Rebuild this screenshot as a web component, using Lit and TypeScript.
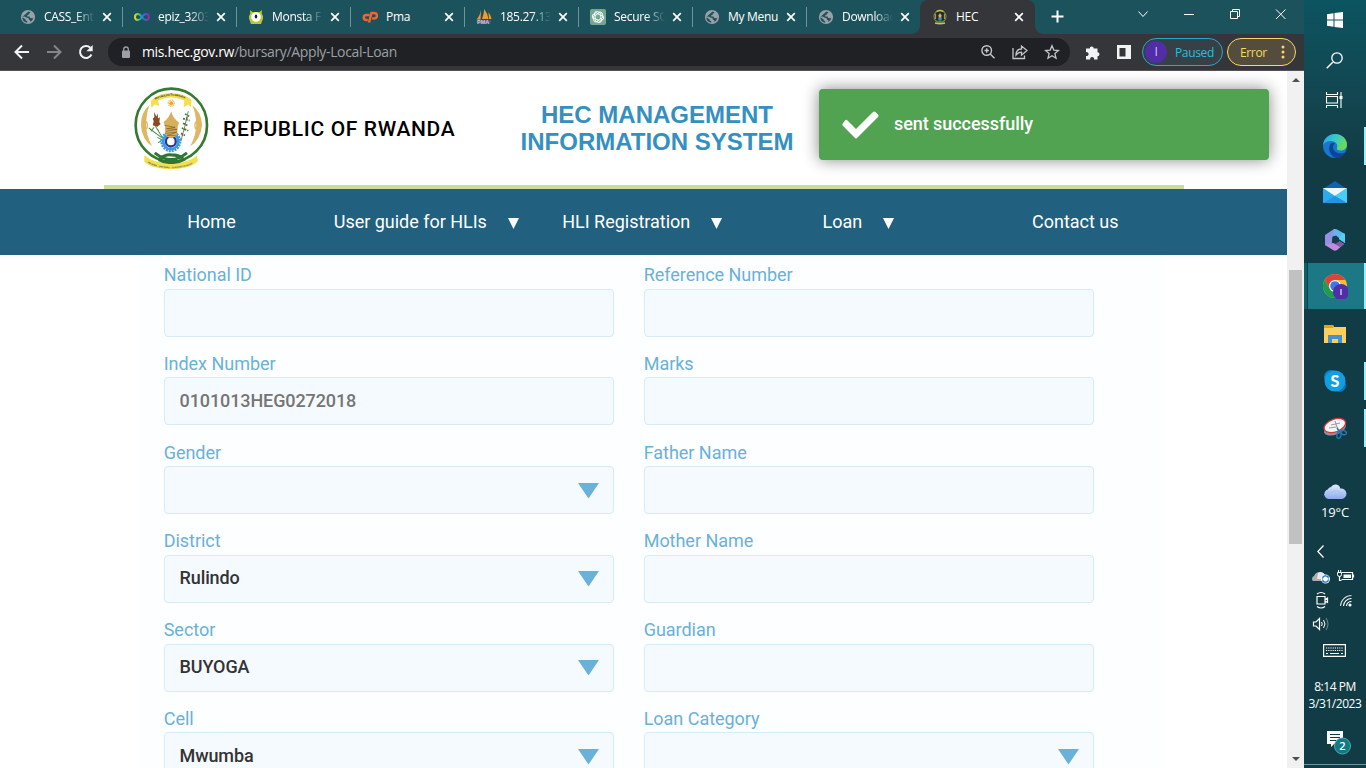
import { LitElement, html, svg, css, nothing } from "lit";
import { customElement, property } from "lit/decorators.js";

const globe = html`<svg width="16" height="16" viewBox="0 0 16 16"><circle cx="8" cy="8" r="7.100" fill="#9aa0a6"/><path d="M8.500 2.500 10.500 3.200 9.800 4.300 8.800 4.600 8.700 5.800 7 6.600 7.200 7.500 9.500 7.600 10.200 9 12.600 9.300 13.400 8.500 12.500 11 10.300 13 10.200 11.200 8.800 10.400 8.700 9.300 6.200 8.400 4.600 7.600 2.500 7.300 2.300 8.600 4.400 9.600 5.600 10.400 5.800 11.600 7.200 12.200 7.200 13.700A5.800 5.800 0 0 1 2.200 8Z" fill="#1c525b"/></svg>`;

const closeIcon = html`<svg class="close" width="10" height="10" viewBox="0 0 10 10"><path d="M1.200 1.200 8.800 8.800M8.800 1.200 1.200 8.800" stroke="#fff" stroke-width="1.700"/></svg>`;

const sealArt = svg`
  <path d="M134 248 Q146 262 178 270 Q213 278 250 270 Q280 262 292 250 L294 266 Q280 286 213 290 Q150 288 133 268Z" fill="#f3e04e"/>
  <circle cx="214.500" cy="159.500" r="108.500" fill="#fff" stroke="#357a30" stroke-width="8"/>
  <path d="M132 250 Q150 268 185 272 L240 272 Q280 266 292 250 L295 268 Q272 289 213 291 Q152 288 133 268Z" fill="#f3e04e"/>
  <path id="motto" d="M142 270 Q160 286 213 288 Q266 286 284 270" fill="none"/>
  <path d="M152 86 Q180 64 214 64 Q250 64 276 84 L274 106 L266 98 L252 106 L254 86 Q214 68 174 86 L178 102 L164 98 L154 108Z" fill="#f3e04e"/>
  <path id="title" d="M165 84 Q213 60 264 84" fill="none"/>
  <text font-family="Liberation Sans" font-weight="700" font-size="8" fill="#333"><textPath href="#title" textLength="94">REPUBULIKA Y'U RWANDA</textPath></text>
  <text font-family="Liberation Sans" font-weight="700" font-size="6.500" fill="#555"><textPath href="#motto" textLength="142">UBUMWE - UMURIMO - GUKUNDA IGIHUGU</textPath></text>
  <circle cx="214" cy="94" r="9" fill="none" stroke="#f5ba45" stroke-width="4" stroke-dasharray="3 1.800"/><circle cx="214" cy="94" r="6" fill="#f3a52e"/>
  <path d="M148 100 Q122 120 122 160 Q126 205 156 222 Q138 190 138 160 Q138 125 148 100Z" fill="#dfb664"/>
  <path d="M278 100 Q306 120 308 160 Q302 205 272 222 Q290 190 290 160 Q290 125 278 100Z" fill="#dfb664"/>
  <path d="M138 148 Q146 160 138 172M290 148 Q282 160 290 172" fill="none" stroke="#dfb664" stroke-width="4"/>
  <path d="M162 120 L169 134 L173 125 L174 140 L180 136 L178 150 L182 156 L172 164 L158 160 L161 148 L158 140 L163 136Z" fill="#8b4a1f"/>
  <path d="M166 162 L188 198M146 168 L184 196M152 178 L162 166M172 196 L188 204 L174 212M176 176 L170 170" stroke="#4f8f4c" stroke-width="3" fill="none"/>
  <path d="M266 118 Q256 164 244 206" stroke="#3d8044" stroke-width="2.500" fill="none"/>
  <path d="M256 126 L270 134M250 140 L270 146M250 154 L266 162M246 168 L266 176M244 184 L256 190" stroke="#3d8044" stroke-width="5" stroke-dasharray="6 3"/>
  <g fill="#b83248"><circle cx="262" cy="138" r="2.500"/><circle cx="256" cy="156" r="2.500"/><circle cx="254" cy="172" r="2.500"/><circle cx="248" cy="188" r="2.500"/><circle cx="242" cy="202" r="3"/></g>
  <circle cx="213" cy="208" r="28" fill="none" stroke="#3b9be0" stroke-width="8" stroke-dasharray="6 2.800"/><circle cx="213" cy="208" r="23" fill="none" stroke="#3b9be0" stroke-width="8"/>
  <circle cx="213" cy="208" r="15" fill="#fff" stroke="#2a3795" stroke-width="7"/>
  <path d="M214 118 Q208 138 191 150 Q194 158 195 164 L196 186 Q200 196 214 198 Q228 196 232 186 L234 164 Q236 158 238 152 Q220 140 214 118Z" fill="#d8b05c"/>
  <path d="M194 160 L226 166 L200 170 L232 172 L198 178M196 184 L232 180 L202 190 L228 190" stroke="#6a4a22" stroke-width="1.600" fill="none"/>
  <path d="M164 242 Q190 262 214 262 Q236 262 262 242M176 262 Q196 246 214 248 Q240 248 252 262 Q234 272 214 270 Q194 272 176 262" fill="none" stroke="#2f7535" stroke-width="9"/>`;

const seal = (w: number, h: number) => html`<svg width=${w} height=${h} viewBox="98 40 234 256" preserveAspectRatio="none">${sealArt}</svg>`;

const smallSeal = html`<svg width="16" height="16" viewBox="0 0 16 16"><circle cx="8" cy="7.500" r="6" fill="#222c26" stroke="#6c8a4c" stroke-width="1.200"/><path d="M4.500 2.500Q8 .5 11.500 2.500M3 14Q8 15.500 13 14" fill="none" stroke="#cfc24e" stroke-width="1.400"/><path d="M3.500 5v5M12.500 5v5" stroke="#b98b48" stroke-width="1.200"/><path d="M8 4 9.600 6.500 9 10H7L6.400 6.500Z" fill="#d8b05c"/><circle cx="8" cy="10" r="1.800" fill="#3d86d8"/><path d="M5 12.500h6" stroke="#3c8a43" stroke-width="1.600"/></svg>`;

const petal = "M8 5.500V4.200a2.500 2.500 0 0 1 4.600 1.500v3L8.500 11";

const tabs = [
  { title: "CASS_Ent", icon: globe },
  { title: "epiz_3203", icon: html`<svg width="16" height="16" viewBox="0 0 16 16"><defs><linearGradient id="inf"><stop offset="0" stop-color="#e6d722"/><stop offset=".35" stop-color="#23b6a8"/><stop offset=".6" stop-color="#2878d8"/><stop offset="1" stop-color="#a322a5"/></linearGradient></defs><path d="M8 8C6.500 5.800 5.500 5 4 5a3 3 0 0 0 0 6c1.500 0 2.500-.8 4-3s2.500-3 4-3a3 3 0 0 1 0 6C10.500 11 9.500 10.200 8 8Z" fill="none" stroke="url(#inf)" stroke-width="2"/></svg>` },
  { title: "Monsta F", icon: html`<svg width="16" height="16" viewBox="0 0 16 16"><path d="M2 1 4.500 3h7L14 1l-.3 3.500Q16 8 14.500 11L13 15H3L1.500 11Q0 8 2.300 4.500Z" fill="#b9c83a"/><circle cx="8" cy="8" r="4.800" fill="#fff"/><ellipse cx="8" cy="7.500" rx="1.300" ry="2" fill="#222"/></svg>` },
  { title: "Pma", icon: html`<svg width="16" height="16" viewBox="0 0 16 16"><path d="M7.500 6H4.300a2.500 2.500 0 0 0 0 5h1.500M7 13.500 9.500 4h2.700a2.300 2.300 0 0 1 0 5.500h-2" fill="none" stroke="#f0662c" stroke-width="2.500"/></svg>` },
  { title: "185.27.13", icon: html`<svg width="16" height="16" viewBox="0 0 16 16"><path d="M5 .5 4.500 10.500H.5Q4 7 5 .5ZM8.200 0Q12 5 12.500 10H6Q8 5 8.200 0ZM12.500 3Q15 7 15.500 10H13Z" fill="#f39a2d"/><path d="M.5 11.500h15l-2 3.500h-12Z" fill="#555b88"/><text x="1" y="15.300" font-family="Liberation Sans" font-weight="700" font-size="5.500" fill="#c9c9dc">PMA</text></svg>` },
  { title: "Secure SQ", icon: html`<svg width="16" height="16" viewBox="0 0 16 16"><rect width="16" height="16" rx="2" fill="#74a892"/><g fill="none" stroke="#fff" stroke-width=".9">${[0, 60, 120, 180, 240, 300].map(a => svg`<path d=${petal} transform="rotate(${a} 8 8)"/>`)}</g></svg>` },
  { title: "My Menu", icon: globe },
  { title: "Download", icon: globe },
  { title: "HEC", icon: smallSeal, active: true },
];

@customElement("browser-chrome")
class BrowserChrome extends LitElement {
  static styles = css`
    :host { display: block; font-family: "Open Sans", "Noto Sans", sans-serif; }
    svg { display: block; flex: none; }
    .strip { display: flex; height: 34px; background: #1c525b; padding-left: 8px; }
    .tab { width: 114px; box-sizing: border-box; display: flex; align-items: center; padding: 0 8px 0 12px; position: relative; }
    .tab.sep::after { content: ""; position: absolute; right: -1px; top: 7px; width: 1px; height: 20px; background: #71929a; }
    .tab.active { background: #35363a; border-radius: 8px 8px 0 0; width: 115px; }
    .tab.active::before, .tab.active::after { content: ""; position: absolute; bottom: 0; width: 8px; height: 8px; }
    .tab.active::before { left: -8px; background: radial-gradient(circle at 0 0, transparent 7.500px, #35363a 8px); }
    .tab.active::after { right: -8px; background: radial-gradient(circle at 100% 0, transparent 7.500px, #35363a 8px); }
    .title { width: 51px; margin-left: 8px; overflow: hidden; white-space: nowrap; color: #fff; font-size: 12px; line-height: 18px; letter-spacing: -0.3px; mask-image: linear-gradient(90deg, #000 62%, transparent 100%); }
    .title.full { mask-image: none; }
    .close { margin-left: 7px; }
    .plus { margin: 10px 0 0 16px; }
    .win { margin-left: auto; display: flex; }
    .bar { height: 37px; box-sizing: border-box; background: #35363a; border-bottom: 1px solid #55505a; display: flex; align-items: center; padding: 0 7px 0 14px; }
    .gap { margin-left: 16px; }
    .side { margin-left: 17px; }
    .omni { flex: none; margin-left: 14px; width: 962px; height: 28px; border-radius: 14px; background: #202124; display: flex; align-items: center; box-sizing: border-box; padding: 0 10px 0 13px; }
    .url { margin-left: 11px; color: #9aa0a6; font-size: 14px; line-height: 20px; letter-spacing: -0.350px; flex: 1; }
    .host { color: #fff; }
    .acts { display: flex; gap: 16px; align-items: center; }
    .pill { height: 28px; box-sizing: border-box; border-radius: 14px; display: flex; align-items: center; font-size: 12px; }
    .paused { width: 81px; margin-left: 11px; border: 1px solid #27a9c8; background: #354147; color: #2fbbdd; padding-left: 2px; letter-spacing: -0.350px; }
    .avatar { width: 22px; height: 22px; border-radius: 50%; background: #512da8; color: #d5c8ee; text-align: center; line-height: 22px; margin-right: 8px; }
    .error { width: 69px; margin-left: 4px; border: 1px solid #fdd663; background: #544d3e; color: #fdd663; padding-left: 12px; letter-spacing: -0.350px; }
    .dots { margin-left: 14px; }
  `;
  render() {
    return html`
      <div class="strip">
        ${tabs.map((t, i) => html`<div class="tab ${t.active ? "active" : i < 7 ? "sep" : ""}">${t.icon}<div class="title ${t.title.length < 8 ? "full" : ""}">${t.title}</div>${closeIcon}</div>`)}
        <svg class="plus" width="13" height="13" viewBox="0 0 13 13"><path d="M6.500 .5v12M.5 6.500h12" stroke="#fff" stroke-width="2"/></svg>
        <div class="win"><svg width="171" height="34" viewBox="0 0 171 34"><g fill="none" stroke="#fff"><path d="M5.500 11.500 10 16.500 14.500 11.500"/><path d="M51 14.500h10"/><path d="M97.500 11.500h7v7h-7zM99.500 11.500v-2h7v7h-2"/><path d="M143 9.500l9.500 9.500M152.500 9.500 143 19"/></g></svg></div>
      </div>
      <div class="bar">
        <svg width="16" height="16" viewBox="0 0 16 16"><path d="M15 8H2M8 1.500 1.500 8 8 14.500" fill="none" stroke="#f1f3f4" stroke-width="2"/></svg>
        <svg class="gap" width="16" height="16" viewBox="0 0 16 16"><path d="M1 8h13M8 1.500 14.500 8 8 14.500" fill="none" stroke="#85868a" stroke-width="2"/></svg>
        <svg class="gap" width="16" height="16" viewBox="0 0 16 16"><path d="M13.500 10.500A6 6 0 1 1 12.300 3.700" fill="none" stroke="#f1f3f4" stroke-width="2"/><path d="M14.700 1v6.300H8.400Z" fill="#f1f3f4"/></svg>
        <div class="omni">
          <svg width="10" height="13" viewBox="0 0 10 13"><rect x="1" y="4.500" width="8" height="7.500" rx="1" fill="#9aa0a6"/><path d="M2.700 5V3.300a2.300 2.300 0 0 1 4.600 0V5" fill="none" stroke="#9aa0a6" stroke-width="1.300"/></svg>
          <div class="url"><span class="host">mis.hec.gov.rw</span>/bursary/Apply-Local-Loan</div>
          <div class="acts">
            <svg width="16" height="16" viewBox="0 0 16 16"><g fill="none" stroke="#c3c6ca" stroke-width="1.400"><circle cx="6.700" cy="6.500" r="4.800"/><path d="M10.200 10 14.500 14.300M4.500 6.500h4.400M6.700 4.300v4.400"/></g></svg>
            <svg width="16" height="16" viewBox="0 0 16 16"><path d="M1 4v10.500h11.500V11.500M9.500 2v3C6 5 4 7.500 4 11c1.500-2 3-2.800 5.500-2.800v3L15 6.500Z" fill="none" stroke="#c3c6ca" stroke-width="1.300"/></svg>
            <svg width="16" height="16" viewBox="0 0 16 16"><path d="M8 1.800 9.800 6.100 14.500 6.500 10.900 9.600 12 14.200 8 11.700 4 14.200 5.100 9.600 1.500 6.500 6.200 6.100Z" fill="none" stroke="#c3c6ca" stroke-width="1.300"/></svg>
          </div>
        </div>
        <svg class="gap" width="14" height="16" viewBox="0 0 14 16"><path d="M0 4.500h3.700a2 2 0 1 1 4 0h3.800v3.700a2 2 0 1 1 0 4V15.500H8a2 2 0 1 0-3.800 0H0V12a2 2 0 1 0 0-3.800Z" fill="#f1f3f4"/></svg>
        <svg class="side" width="14" height="14" viewBox="0 0 14 14"><path d="M0 0h14v14H0ZM2.500 3v8.500H8.500V3Z" fill="#f1f3f4" fill-rule="evenodd"/></svg>
        <div class="pill paused"><div class="avatar">I</div>Paused</div>
        <div class="pill error">Error<svg class="dots" width="4" height="14" viewBox="0 0 4 14"><g fill="#fdd663"><circle cx="2" cy="2" r="1.500"/><circle cx="2" cy="7" r="1.500"/><circle cx="2" cy="12" r="1.500"/></g></svg></div>
      </div>`;
  }
}

@customElement("form-field")
class FormField extends LitElement {
  @property() label = "";
  @property() value = "";
  @property({ type: Boolean }) select = false;
  @property({ type: Boolean }) muted = false;
  static styles = css`
    :host { display: block; height: 88.75px; }
    .label { height: 27px; line-height: 21px; font-size: 18px; letter-spacing: -0.030px; color: #69b1d9; box-sizing: border-box; padding-top: 2.400px; margin-left: -0.300px; }
    .box { height: 48px; box-sizing: border-box; border: 1px solid #d6ebf5; border-radius: 4px; background: #f5faff; display: flex; align-items: center; justify-content: space-between; padding: 0 14.500px; font-size: 18px; font-weight: 500; letter-spacing: -0.100px; color: #333; }
    .muted { color: #757575; }
    .value { margin-top: -2px; }
    .caret { margin-top: 1px; }
  `;
  render() {
    return html`<div class="label">${this.label}</div>
      <div class="box ${this.muted ? "muted" : ""}"><span class="value">${this.value}</span>${this.select ? html`<svg class="caret" width="21" height="16" viewBox="0 0 21 16"><path d="M0 0h21L10.500 15.500Z" fill="#69b1d9"/></svg>` : nothing}</div>`;
  }
}

const fields = [
  { label: "National ID" }, { label: "Reference Number" },
  { label: "Index Number", value: "0101013HEG0272018", muted: true }, { label: "Marks" },
  { label: "Gender", select: true }, { label: "Father Name" },
  { label: "District", value: "Rulindo", select: true }, { label: "Mother Name" },
  { label: "Sector", value: "BUYOGA", select: true }, { label: "Guardian" },
  { label: "Cell", value: "Mwumba", select: true }, { label: "Loan Category", select: true },
];

@customElement("bursary-page")
class BursaryPage extends LitElement {
  static styles = css`
    :host { display: flex; overflow: hidden; font-family: Roboto, sans-serif; background: #fff; }
    .content { width: 1287px; position: relative; }
    .head { width: 1080px; height: 118px; margin-left: 104px; box-sizing: border-box; border-bottom: 4px solid #c7de94; display: flex; padding-left: 29px; }
    .seal { margin-top: 14px; }
    .country { margin: 45px 0 0 13px; width: 284px; font-size: 21px; font-weight: 500; line-height: 26px; letter-spacing: 0.660px; color: #000; white-space: nowrap; }
    .system { width: 300px; margin-top: 30px; text-align: center; font: bold 24px/27px "Liberation Sans", sans-serif; color: #3490c0; }
    .nav { height: 66px; background: #22607f; color: #fff; font-size: 18px; line-height: 66px; display: grid; grid-template-columns: 146.500px 228.500px 260.200px 209.600px 1fr; padding-left: 187.300px; letter-spacing: -0.020px; }
    .item { display: flex; align-items: center; white-space: nowrap; }
    .down { margin: 3px 0 0 21px; }
    .form { margin-left: 140px; width: 1024px; box-sizing: border-box; background: #fdfeff; padding: 6.700px 70px 0 24px; display: grid; grid-template-columns: 450px 450px; column-gap: 30px; }
    .toast { position: absolute; left: 819px; top: 18px; width: 450px; height: 71px; box-sizing: border-box; border-radius: 4px; background: #51a351; box-shadow: 0 0 16px #888; color: #fff; display: flex; align-items: center; padding-left: 23px; font-size: 18px; font-weight: 500; }
    .msg { margin: -2px 0 0 15px; letter-spacing: -0.060px; }
    .scroll { width: 17px; background: #f1f1f1; display: flex; flex-direction: column; align-items: center; }
    .up { margin-top: 7px; }
    .thumb { width: 13px; height: 274px; margin-top: 188px; background: #c1c1c1; }
    .dn { margin: auto 0 7px; }
  `;
  render() {
    const nav: [string, boolean][] = [["Home", false], ["User guide for HLIs", true], ["HLI Registration", true], ["Loan", true], ["Contact us", false]];
    return html`
      <div class="content">
        <div class="head"><div class="seal">${seal(77, 86)}</div><div class="country">REPUBLIC OF RWANDA</div><div class="system">HEC MANAGEMENT<br>INFORMATION SYSTEM</div></div>
        <div class="nav">${nav.map(([t, d]) => html`<div class="item">${t}${d ? html`<svg class="down" width="11" height="11" viewBox="0 0 11 11"><path d="M0 0h11L5.500 11Z" fill="#fff"/></svg>` : nothing}</div>`)}</div>
        <div class="form">${fields.map((f: any) => html`<form-field .label=${f.label} .value=${f.value ?? ""} .select=${!!f.select} .muted=${!!f.muted}></form-field>`)}</div>
        <div class="toast"><svg width="37" height="28" viewBox="0 0 37 28"><path d="M5 9 14 18 31 1Q32.200 0 33.400 1L36 3.600Q37 4.800 36 6L15 27Q14 28 13 27L.8 14.800Q-.2 13.600 .8 12.500L3 9.500Q4 8.500 5 9Z" fill="#fff"/></svg><div class="msg">sent successfully</div></div>
      </div>
      <div class="scroll"><svg class="up" width="8" height="4"><path d="M0 4 4 0 8 4Z" fill="#505050"/></svg><div class="thumb"></div><svg class="dn" width="8" height="4"><path d="M0 0h8L4 4Z" fill="#505050"/></svg></div>`;
  }
}

const apps = [
  { mark: true, art: svg`<defs><linearGradient id="eg" x1="0" y1="0" x2="1" y2=".4"><stop offset="0" stop-color="#2a9fe6"/><stop offset=".5" stop-color="#35c8d3"/><stop offset="1" stop-color="#66d95a"/></linearGradient></defs><circle cx="12" cy="12" r="12" fill="#1877cc"/><path d="M0 11C1 4 6 0 12 0c8 0 12 6 12 10.500 0 4-3 6-6.500 6-3 0-4-1-3.500-2.500C15.500 10 12 7 8 7 4 7 1 9 0 11Z" fill="url(#eg)"/><path d="M8 9.500C4 14 7 22 13 24c4 0 8-2 10-6-5 3-13 1-13-5 0-2 1-3 2-4-1.500-.5-3-.3-4 .5Z" fill="#0e4494"/>` },
  { art: svg`<path d="M0 8 12 0 24 8Z" fill="#1462b4"/><path d="M0 7h24v15H0Z" fill="#2da9ee"/><path d="M0 7h24L12 15Z" fill="#f3f5f7"/><path d="M24 7v15L12 15Z" fill="#49cdf6"/><path d="M0 22 12 15 24 22Z" fill="#2096e3"/>` },
  { art: svg`<path d="M2 7 11 1 13 2 10 8 9 14 8 19 2 17Z" fill="#8f93e0"/><path d="M11 1 Q13 .5 15 2L22 6V15L16 11 10 8Z" fill="#62b5ee"/><path d="M16 11 22 15V6L19 5Z" fill="#4fd0f5"/><path d="M2 17 10 15 16 13 21 16 14 22Q12 23.500 10 22Z" fill="#c28be0"/><path d="M10 15 16 13 21 16 17 19Z" fill="#7b5aa8"/><path d="M9.500 9 13 7.500 16 10V13.500L12.500 15.800 9 14Z" fill="#163c49"/>` },
  { mark: true, active: true, art: svg`<circle cx="12" cy="12" r="12" fill="#f7bf2e"/><path d="M1.600 6A12 12 0 0 1 22.400 6H12L7 15Z" fill="#db4437"/><path d="M1.600 6A12 12 0 0 0 12 24L17 15 7 15Z" fill="#209b52"/><circle cx="12" cy="12" r="6" fill="#fff"/><circle cx="12" cy="12" r="4.800" fill="#3c79e6"/><circle cx="18" cy="18" r="8" fill="#512da8"/><path d="M18 15v6" stroke="#c6b7ea" stroke-width="1.600"/>` },
  { art: svg`<path d="M1 3h9l1 2h12v16H1Z" fill="#fbd15e"/><path d="M1 3h9l1 1.500L10 6H1Z" fill="#e5a40c"/><path d="M5 21v-8h14v8h-4v-4H9v4Z" fill="#4390d4"/>` },
  { mark: true, art: svg`<circle cx="8" cy="8" r="7" fill="#0c7fc8"/><circle cx="16.500" cy="16.500" r="6.500" fill="#0976c4"/><circle cx="12" cy="12" r="10.500" fill="#119fe2"/><text x="12" y="17.600" text-anchor="middle" font-family="Lato" font-weight="900" font-size="16" fill="#fff">S</text>` },
  { mark: true, art: svg`<g transform="rotate(-20 12 10)"><ellipse cx="11" cy="12.500" rx="11.500" ry="6" fill="#8d9398"/><ellipse cx="12" cy="9.500" rx="11.200" ry="6.300" fill="#f5f6f7" stroke="#d9363c" stroke-width="1.200"/></g><path d="M12 5 15 14M17 7 8 9M6 12l7-1" stroke="#9a9fa4" stroke-width="1.100"/><g fill="none" stroke="#2478b4" stroke-width="1.400"><path d="M14 12 17 16 19 15"/><ellipse cx="16" cy="19" rx="2" ry="3.400" transform="rotate(15 16 19)"/><ellipse cx="20.500" cy="16.500" rx="3" ry="2" transform="rotate(25 20.500 16.500)"/></g>` },
];

@customElement("task-bar")
class TaskBar extends LitElement {
  static styles = css`
    :host { display: flex; flex-direction: column; align-items: stretch; color: #fff; font: 12px/17px "Open Sans", "Noto Sans", sans-serif; background: linear-gradient(#0b5460, #134650 100px, #123c45 160px, #123c45); overflow: hidden; }
    svg { display: block; }
    .cell { height: 40px; display: grid; place-items: center; }
    .find { padding-right: 1px; }
    .apps { padding-top: 2.500px; }
    .app { height: 47px; box-sizing: border-box; display: grid; place-items: center; }
    .mark { background: linear-gradient(#98f0fa, #98f0fa) right center / 2px 38px no-repeat; }
    .active { height: 46px; margin: -1px 0 2px; padding-top: 1px; background: linear-gradient(#98f0fa, #98f0fa) right center / 2px 100% no-repeat, linear-gradient(90deg, #0f5f69 3px, #09434c 3px, #09434c 4px, #1c7884 4px); }
    .weather { margin-top: 31px; display: flex; flex-direction: column; align-items: center; font-size: 13px; letter-spacing: -0.100px; }
    .temp { margin-top: 5px; }
    .chev { margin: 24px 0 0 13px; }
    .tray { margin: 6px 0 0 8px; display: grid; grid-template-columns: 20px 24px; grid-auto-rows: 24px; }
    .key { margin: 8px 0 0 19px; }
    .clock { margin-top: 21px; text-align: center; letter-spacing: -0.450px; white-space: nowrap; }
    .note { margin: 18px 0 0 23px; }
    .edge { margin-top: 8px; height: 1px; background: #70959b; }
  `;
  render() {
    return html`
      <div class="cell"><svg width="16" height="16" viewBox="0 0 16 16"><path d="M0 2.300 6.500 1.300V7.500H0ZM7.500 1.100 16 0V7.500H7.500ZM0 8.500H6.500V14.700L0 13.700ZM7.500 8.500H16V16L7.500 14.900Z" fill="#fff"/></svg></div>
      <div class="cell find"><svg width="17" height="17" viewBox="0 0 17 17"><path d="M.7 16.300 6.700 10.200" stroke="#fff" stroke-width="1.500"/><circle cx="11" cy="6" r="5.200" fill="none" stroke="#fff" stroke-width="1.300"/></svg></div>
      <div class="cell find"><svg width="17" height="16" viewBox="0 0 17 16"><path d="M.5 0v2.500h11V0M.5 16v-2.500h11V16M.5 4.500h11v6.500H.5zM15 0v16" fill="none" stroke="#fff" stroke-width="1.100"/><path d="M13.500 4h3v3h-3z" fill="#fff"/></svg></div>
      <div class="apps">${apps.map(a => html`<div class="app ${a.mark ? "mark" : ""} ${a.active ? "active" : ""}"><svg width="26" height="26" viewBox="0 0 26 26"><g transform="translate(1 1)">${a.art}</g></svg></div>`)}</div>
      <div class="weather"><svg width="24" height="16" viewBox="0 0 24 16"><defs><linearGradient id="cl" x2="0" y2="1"><stop offset="0" stop-color="#e2ebfc"/><stop offset="1" stop-color="#8cabea"/></linearGradient></defs><path d="M5 16a5 5 0 0 1-.3-9.500A5 5 0 0 1 8 4a5 5 0 0 1 9.300 1.500A5.300 5.300 0 0 1 19 16Z" fill="url(#cl)"/><path d="M1 12Q5 8 9 9 15 6 18 11L23 12" stroke="#a9c0f1" fill="none"/></svg><div class="temp">19°C</div></div>
      <svg class="chev" width="7" height="13" viewBox="0 0 7 13"><path d="M6.500 .5 .8 6.500 6.500 12.500" fill="none" stroke="#fff" stroke-width="1.300"/></svg>
      <div class="tray">
        <svg width="24" height="24" viewBox="2 0 24 24"><path d="M3 17a3 3 0 0 1 1-5q2-5 7-3.500 4 0 4 4v4.500Z" fill="#a9afb2"/><path d="M8 9q4-2.500 7 2l-2 4H7Z" fill="#e9eaeb"/><circle cx="15.500" cy="15" r="4.500" fill="#fff"/><path d="M12.500 14.500a3 3 0 0 1 5.500-1.300V11.500M18.500 15.500a3 3 0 0 1-5.500 1.300V18.500" fill="none" stroke="#1875c8" stroke-width="1.300"/></svg>
        <svg width="24" height="24" viewBox="0 0 24 24"><path d="M9.500 8.500h11v7h-11M21.500 10.500v3M7.500 12v5M7.500 16.500h2" fill="none" stroke="#fff" stroke-width="1.200"/><path d="M11.500 10.500h7.500v3.500h-7.500Z" fill="#fff"/><path d="M5.500 8.500h4v2q0 2-2 2t-2-2ZM6.500 6v2.500M8.700 6v2.500" fill="none" stroke="#fff"/></svg>
        <svg width="24" height="24" viewBox="0 0 24 24"><path d="M5 8.500h8v7.500H5ZM13 11.500l2.500-1.500v4.500L13 13M5 6q4-3 8 0M5 18.500q4 3 8 0" fill="none" stroke="#fff" stroke-width="1.200"/></svg>
        <svg width="24" height="24" viewBox="0 0 24 24"><g fill="none" stroke="#fff" stroke-width="1.100"><path d="M14.500 18a5 5 0 0 1 5-4.500"/><path d="M11.500 18a8 8 0 0 1 8-7.500"/><path d="M8.500 18a11 11 0 0 1 11-10.500" opacity=".8"/></g><circle cx="18" cy="17" r="1.600" fill="#fff"/></svg>
        <svg width="24" height="24" viewBox="0 0 24 24"><path d="M1.500 10h2.500l3.500-3.500v11L4 14H1.500Z" fill="none" stroke="#fff" stroke-width="1.200"/><path d="M9.500 10q1.500 2 0 4M11.500 8q3 4 0 8" fill="none" stroke="#fff"/><path d="M14 6q4 6 0 12" fill="none" stroke="#71898e"/></svg>
      </div>
      <svg class="key" width="23" height="13" viewBox="0 0 23 13"><path d="M.6 .6h21.800v11.800H.6z" fill="none" stroke="#fff" stroke-width="1.200"/><path d="M3 4h17M3 6.500h17" stroke="#fff" stroke-width="1.200" stroke-dasharray="1.200 1"/><path d="M3 9.500h2M7 9.500h9M18 9.500h2" stroke="#fff"/></svg>
      <div class="clock">8:14 PM<br>3/31/2023</div>
      <svg class="note" width="26" height="26" viewBox="0 0 26 26"><path d="M0 1h16v13H7l-3 3v-3H0Z" fill="#fff"/><path d="M3 4.500h10M3 7.500h10M3 10.500h6" stroke="#123c45"/><circle cx="15.500" cy="16" r="8" fill="#0f7b85" stroke="#55a5ad"/><text x="15.500" y="20" text-anchor="middle" font-family="Open Sans" font-weight="600" font-size="11" fill="#fff">2</text></svg>
      <div class="edge"></div>`;
  }
}

@customElement("app-root")
class AppRoot extends LitElement {
  static styles = css`
    :host { display: grid; grid-template-columns: 1304px 62px; width: 1366px; height: 768px; overflow: hidden; }
    .browser { display: grid; grid-template-rows: 71px 697px; min-width: 0; }
  `;
  render() {
    return html`<div class="browser"><browser-chrome></browser-chrome><bursary-page></bursary-page></div><task-bar></task-bar>`;
  }
}
